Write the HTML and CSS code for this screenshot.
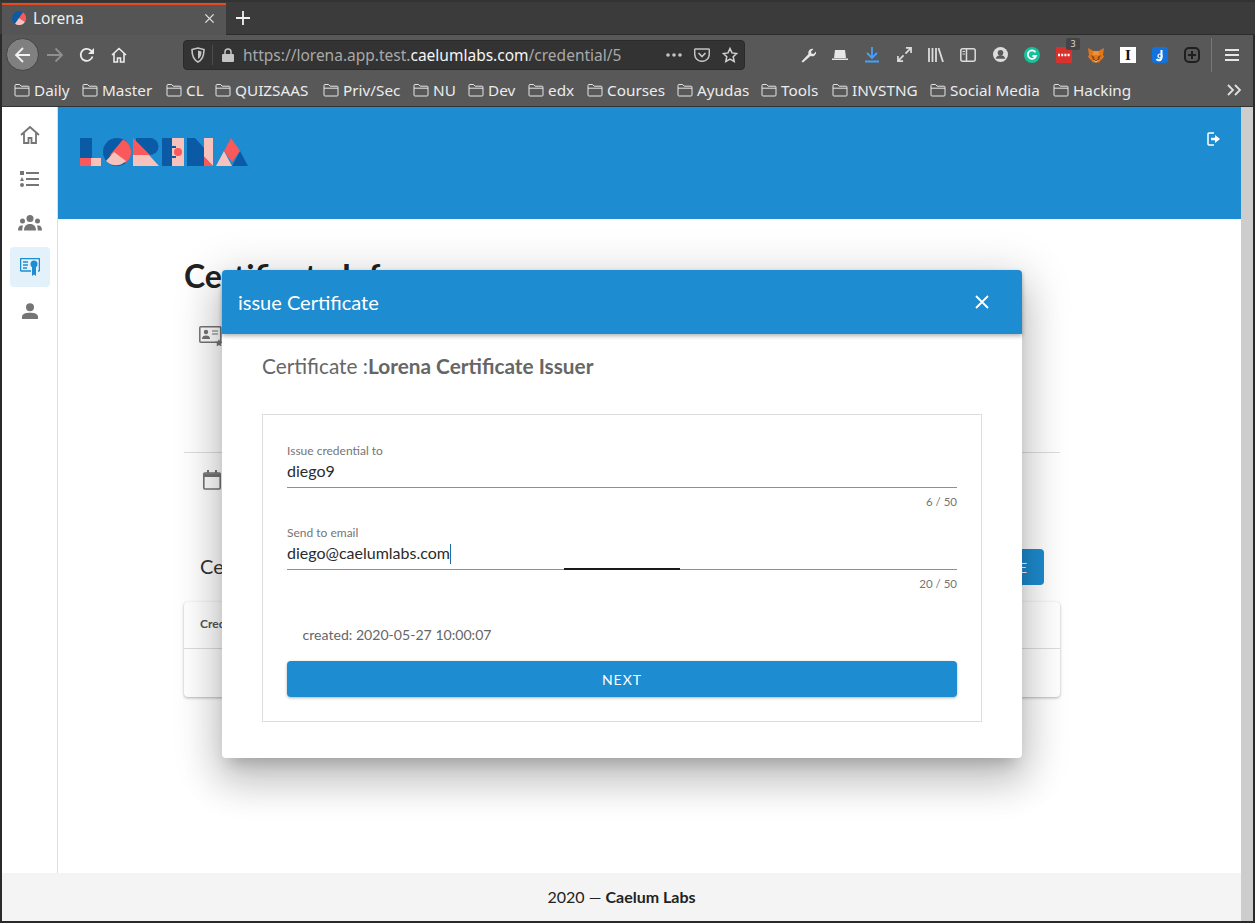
FILE: index.html

```html
<!DOCTYPE html>
<html lang="en">
<head>
  <meta charset="UTF-8">
  <title>Lorena</title>
  <link rel="stylesheet" href="styles.css">
</head>
<body>
  <svg class="defs" width="0" height="0">
    <symbol id="folder" viewBox="0 0 16 16">
      <path d="M1 13V3.500a1 1 0 0 1 1-1h3.600l1.600 1.700H14a1 1 0 0 1 1 1V13a1 1 0 0 1-1 1H2a1 1 0 0 1-1-1zM1 6.200h14" fill="none" stroke="#e6e6e6" stroke-width="1"/>
    </symbol>
  </svg>

  <div class="tabbar">
    <div class="tab">
      <svg class="favicon" viewBox="0 0 14 14">
        <circle cx="7" cy="7" r="7" fill="#0b5aa6"/>
        <path d="M7 7L11 1.300A7 7 0 0 1 13 11z" fill="#f9595a"/>
        <path d="M7 7L13 11A7 7 0 0 1 3 12.800z" fill="#f7c2bc"/>
      </svg>
      <span class="tab-title">Lorena</span>
      <svg class="tab-close" viewBox="0 0 12 12"><path d="M1.500 1.500l9 9M10.500 1.500l-9 9" stroke="#e0e0e0" stroke-width="1.500"/></svg>
    </div>
    <svg class="new-tab" viewBox="0 0 14 14"><path d="M7 0v14M0 7h14" stroke="#f2f2f2" stroke-width="1.800"/></svg>
  </div>

  <div class="toolbar">
    <div class="back"><svg viewBox="0 0 18 18" width="18" height="18"><path d="M2 9h14M9 2L2 9l7 7" fill="none" stroke="#f2f2f2" stroke-width="1.800"/></svg></div>
    <div class="tool"><svg viewBox="0 0 18 18" width="18" height="18"><path d="M1 9h15M9.500 2.500L16 9l-6.500 6.500" fill="none" stroke="#8f8f8f" stroke-width="1.800"/></svg></div>
    <div class="tool"><svg viewBox="0 0 16 16" width="16" height="16"><path d="M13.500 9.500A6 6 0 1 1 11.500 3.200L14 5.500" fill="none" stroke="#ececec" stroke-width="1.800"/><path d="M15 1v6H9z" fill="#ececec"/></svg></div>
    <div class="tool home"><svg viewBox="0 0 16 16" width="16" height="16"><path d="M1 8l7-6.500L15 8M3 6.500V15h3.500v-4h3v4H13V6.500" fill="none" stroke="#ececec" stroke-width="1.600"/></svg></div>

    <div class="urlbar">
      <svg class="url-icon" viewBox="0 0 14 16" width="14" height="16"><path d="M1 2.500L7 1l6 1.500c0 6-1 10-6 12.500C2 12.500 1 8.500 1 2.500z" fill="none" stroke="#c4c4c4" stroke-width="1.600"/><path d="M7 3.500l3.500 1c0 3-.5 5.500-3.500 7.500z" fill="#c4c4c4"/></svg>
      <span class="url-sep"></span>
      <svg class="url-lock" viewBox="0 0 12 14" width="12" height="14"><path d="M3 6V4a3 3 0 0 1 6 0v2" fill="none" stroke="#c4c4c4" stroke-width="1.500"/><rect x="0" y="6" width="12" height="8" rx="1" fill="#c4c4c4"/></svg>
      <span class="url-text">https://lorena.app.test.<b>caelumlabs.com</b>/credential/5</span>
      <svg class="url-dots" viewBox="0 0 16 4" width="16" height="4"><circle cx="2" cy="2" r="1.800" fill="#c4c4c4"/><circle cx="8" cy="2" r="1.800" fill="#c4c4c4"/><circle cx="14" cy="2" r="1.800" fill="#c4c4c4"/></svg>
      <svg class="url-pocket" viewBox="0 0 16 14" width="16" height="14"><path d="M1.500 1h13a.8.8 0 0 1 .8.800V6a7.300 7.300 0 0 1-14.600 0V1.800a.8.8 0 0 1 .8-.8z" fill="none" stroke="#c4c4c4" stroke-width="1.500"/><path d="M4.500 5L8 8.500 11.500 5" fill="none" stroke="#c4c4c4" stroke-width="1.700"/></svg>
      <svg class="url-star" viewBox="0 0 16 16" width="16" height="16"><path d="M8 1.500l2 4.400 4.700.6-3.500 3.200 1 4.700L8 12l-4.200 2.400 1-4.700-3.500-3.200 4.700-.6z" fill="none" stroke="#d0d0d0" stroke-width="1.500"/></svg>
    </div>

    <div class="addons">
      <div class="tool"><svg viewBox="0 0 16 16" width="16" height="16"><path d="M1.500 14.500l7-7.500a4 4 0 0 1 5-5l-2.500 2.500.5 2 2 .5L16 4.500a4 4 0 0 1-5.500 4.500L3 15.500z" fill="#e6e6e6"/></svg></div>
      <div class="tool"><svg viewBox="0 0 16 12" width="16" height="12"><path d="M3 1h10l1 8H2z" fill="#e6e6e6"/><path d="M0 9.500h16V11H0z" fill="#e6e6e6"/></svg></div>
      <div class="tool"><svg viewBox="0 0 14 16" width="14" height="16"><path d="M7 0v10M2 6l5 5 5-5" fill="none" stroke="#45a1ff" stroke-width="1.800"/><path d="M0 14.500h14" stroke="#45a1ff" stroke-width="2"/></svg></div>
      <div class="tool"><svg viewBox="0 0 16 16" width="15" height="15"><path d="M9.500 1H15v5.500M15 1L9 7M6.500 15H1V9.500M1 15l6-6" fill="none" stroke="#dcdcdc" stroke-width="1.800"/></svg></div>
      <div class="tool"><svg viewBox="0 0 16 14" width="16" height="14"><path d="M1 0v14M4.500 0v14M8 0v14M10.500 0l4.500 14" fill="none" stroke="#dcdcdc" stroke-width="1.800"/></svg></div>
      <div class="tool"><svg viewBox="0 0 16 14" width="16" height="14"><rect x=".8" y=".8" width="14.400" height="12.400" rx="2" fill="none" stroke="#dcdcdc" stroke-width="1.500"/><path d="M6.500 1v12" stroke="#dcdcdc" stroke-width="1.500"/><path d="M2.500 3.500h2.500M2.500 6h2.500" stroke="#dcdcdc"/></svg></div>
      <div class="tool"><svg viewBox="0 0 16 16" width="15" height="15"><circle cx="8" cy="8" r="8" fill="#dcdcdc"/><circle cx="8" cy="6.200" r="3" fill="#5a5a5a"/><path d="M2.800 12.500a5.500 5.500 0 0 1 10.400 0z" fill="#5a5a5a"/></svg></div>
      <div class="tool"><svg viewBox="0 0 16 16" width="16" height="16"><circle cx="8" cy="8" r="8" fill="#15c39a"/><path d="M11.500 5.200A4.200 4.200 0 1 0 12 9H8.500" fill="none" stroke="#fff" stroke-width="1.800"/></svg></div>
      <div class="tool addon-red">
        <svg viewBox="0 0 16 16" width="16" height="16"><rect width="16" height="16" rx="1" fill="#d9312b"/><path d="M2 8h12" stroke="#fff" stroke-width="2.400" stroke-dasharray="2 1.200"/></svg>
        <span class="badge">3</span>
      </div>
      <div class="tool"><svg viewBox="0 0 16 16" width="16" height="16"><path d="M0 1l5.500 3h5L16 1l-1 7 1 2-3 3-2 2.500H5L3 13l-3-3 1-2z" fill="#e2761b"/><path d="M5.500 4h5l1 4H4.500z" fill="#f0913a"/><path d="M3 8l3 1.500L7 13H5zM13 8l-3 1.500L9 13h2z" fill="#8f4d17"/><path d="M6 13.500h4L8 15.500z" fill="#e8d5c0"/><path d="M6.800 13h2.400L8 14.200z" fill="#2c2018"/></svg></div>
      <div class="tool"><div class="addon-i">I</div></div>
      <div class="tool"><svg viewBox="0 0 16 16" width="16" height="16"><rect width="16" height="16" rx="3" fill="#1273de"/><path d="M9.500 3v7.500a2.700 2.700 0 0 1-5 1.500" fill="none" stroke="#fff" stroke-width="2"/><circle cx="8" cy="9" r="2" fill="none" stroke="#fff" stroke-width="1.200"/></svg></div>
      <div class="tool"><svg viewBox="0 0 16 16" width="16" height="16"><rect x="1" y="1" width="14" height="14" rx="4" fill="none" stroke="#1f1f1f" stroke-width="2"/><path d="M8 4v8M4 8h8" stroke="#1f1f1f" stroke-width="2"/></svg></div>
    </div>
    <span class="tool-sep"></span>
    <div class="tool menu"><svg viewBox="0 0 14 12" width="14" height="12"><path d="M0 1h14M0 6h14M0 11h14" stroke="#e6e6e6" stroke-width="1.800"/></svg></div>
  </div>

  <div class="bookmarks">
    <div class="bookmark"><svg width="16" height="16"><use href="#folder"/></svg>Daily</div>
    <div class="bookmark"><svg width="16" height="16"><use href="#folder"/></svg>Master</div>
    <div class="bookmark"><svg width="16" height="16"><use href="#folder"/></svg>CL</div>
    <div class="bookmark"><svg width="16" height="16"><use href="#folder"/></svg>QUIZSAAS</div>
    <div class="bookmark"><svg width="16" height="16"><use href="#folder"/></svg>Priv/Sec</div>
    <div class="bookmark"><svg width="16" height="16"><use href="#folder"/></svg>NU</div>
    <div class="bookmark"><svg width="16" height="16"><use href="#folder"/></svg>Dev</div>
    <div class="bookmark"><svg width="16" height="16"><use href="#folder"/></svg>edx</div>
    <div class="bookmark"><svg width="16" height="16"><use href="#folder"/></svg>Courses</div>
    <div class="bookmark"><svg width="16" height="16"><use href="#folder"/></svg>Ayudas</div>
    <div class="bookmark"><svg width="16" height="16"><use href="#folder"/></svg>Tools</div>
    <div class="bookmark"><svg width="16" height="16"><use href="#folder"/></svg>INVSTNG</div>
    <div class="bookmark"><svg width="16" height="16"><use href="#folder"/></svg>Social Media</div>
    <div class="bookmark"><svg width="16" height="16"><use href="#folder"/></svg>Hacking</div>
    <svg class="more" viewBox="0 0 14 12" width="14" height="12"><path d="M1 1l5 5-5 5M8 1l5 5-5 5" fill="none" stroke="#e0e0e0" stroke-width="1.800"/></svg>
  </div>

  <div class="viewport">
    <div class="page">
      <div class="app">
        <nav class="sidebar">
          <a class="nav-item"><svg viewBox="0 0 20 20" width="20" height="20"><path d="M1 10L10 2l9 8M4 8v10h4.500v-5h3v5H16V8" fill="none" stroke="#757575" stroke-width="1.800"/></svg></a>
          <a class="nav-item"><svg viewBox="0 0 20 18" width="20" height="18"><path d="M0 1h4v4H0zM2 7l2 4H0zM2 13a2 2 0 1 1 0 4 2 2 0 0 1 0-4z" fill="#757575"/><path d="M6 3h13M6 9h13M6 15h13" stroke="#757575" stroke-width="2"/></svg></a>
          <a class="nav-item"><svg viewBox="0 0 24 16" width="24" height="16"><circle cx="12" cy="3.500" r="3.500" fill="#757575"/><circle cx="4.500" cy="6" r="2.500" fill="#757575"/><circle cx="19.500" cy="6" r="2.500" fill="#757575"/><path d="M6 15.500c0-4 2-6.500 6-6.500s6 2.500 6 6.500zM0 15.500c0-3 1-5 3.500-5h1.500C4.500 12 4.300 13.500 4.300 15.500zM24 15.500c0-3-1-5-3.500-5H19c.5 1.500.7 3 .7 5z" fill="#757575"/></svg></a>
          <a class="nav-item active"><svg viewBox="0 0 20 18" width="20" height="18"><path d="M11 13H1.500a1 1 0 0 1-1-1V1.500a1 1 0 0 1 1-1h17a1 1 0 0 1 1 1V12a1 1 0 0 1-1 1h-.5" fill="none" stroke="#1e8cd0" stroke-width="1.500"/><path d="M3 4h5M3 7h5M3 10h4" stroke="#1e8cd0" stroke-width="1.500"/><circle cx="14" cy="6" r="3.500" fill="#1e8cd0"/><path d="M12 8h4v10l-2-1.500-2 1.500z" fill="#1e8cd0"/></svg></a>
          <a class="nav-item"><svg viewBox="0 0 16 16" width="16" height="16"><circle cx="8" cy="4.200" r="4" fill="#757575"/><path d="M0 16v-2c0-2.800 3-4.200 8-4.200s8 1.400 8 4.200v2z" fill="#757575"/></svg></a>
        </nav>
        <main class="main">
          <header class="header">
            <svg class="logo" viewBox="0 0 168 28" width="168" height="28">
              <path d="M0 0h12v20H0z" fill="#0b5aa6"/>
              <path d="M0 20h11v8H0z" fill="#f9595a"/>
              <path d="M11 20h10v8H11z" fill="#f7c2bc"/>
              <circle cx="37" cy="14" r="14" fill="#0b5aa6"/>
              <path d="M30 17L43 1.400A14 14 0 0 1 46 25z" fill="#f9595a"/>
              <path d="M34 14L46 23A14 14 0 0 1 26 23z" fill="#f7c2bc"/>
              <path d="M56 0h14a8.500 8.500 0 0 1 0 17H56z" fill="#0b5aa6"/>
              <path d="M53 0v17h17z" fill="#f9595a"/>
              <path d="M53 17h16l10 11H53z" fill="#f7c2bc"/>
              <path d="M82 0h10v28H82z" fill="#0b5aa6"/>
              <path d="M92 0h12v28H92z" fill="#f7c2bc"/>
              <path d="M92 8h4v2h-4zM92 18h4v2h-4z" fill="#0b5aa6"/>
              <circle cx="98" cy="14" r="4" fill="#f9595a"/>
              <path d="M107 0h8l9 10v18h-17z" fill="#0b5aa6"/>
              <path d="M124 0h9v28l-9-9.500z" fill="#f7c2bc"/>
              <path d="M124 18.500l9 9.500h-9z" fill="#f9595a"/>
              <path d="M160 13l8 15h-16z" fill="#0b5aa6"/>
              <path d="M136 28l8-15 8 15z" fill="#f7c2bc"/>
              <path d="M151 0l9 13-8 11-8-11z" fill="#f9595a"/>
            </svg>
            <svg class="logout" viewBox="0 0 13 14" width="13" height="14"><path d="M7 1H2a1 1 0 0 0-1 1v10a1 1 0 0 0 1 1h5" fill="none" stroke="#fff" stroke-width="1.500"/><path d="M4 5.700h4V3l5 4-5 4V8.300H4z" fill="#fff"/></svg>
          </header>

          <div class="content">
            <h1 class="page-title">Certificate Info</h1>
            <div class="info-block">
              <svg viewBox="0 0 24 20" width="24" height="20"><rect x=".8" y=".8" width="21" height="15.500" rx="1" fill="none" stroke="#757575" stroke-width="1.500"/><circle cx="7" cy="6" r="2.200" fill="#757575"/><path d="M3 13c0-2.500 1.500-3.500 4-3.500s4 1 4 3.500z" fill="#757575"/><path d="M13 5h6M13 8h6" stroke="#757575" stroke-width="1.200"/><path d="M20 13l1.200 2.500 2.800.3-2 1.900.5 2.800-2.500-1.400-2.500 1.400.5-2.800-2-1.900 2.800-.3z" fill="#757575"/></svg>
            </div>
            <div class="info-date">
              <svg viewBox="0 0 18 20" width="18" height="20"><path d="M1.800 3h14.400a1 1 0 0 1 1 1v14a1 1 0 0 1-1 1H1.800a1 1 0 0 1-1-1V4a1 1 0 0 1 1-1z" fill="none" stroke="#757575" stroke-width="1.600"/><path d="M1 3.500h16v3.500H1zM4 0h2v3H4zM12 0h2v3h-2z" fill="#757575"/></svg>
            </div>
            <div class="cert-head">
              <h2 class="cert-title">Certificates</h2>
              <button class="issue-btn">ISSUE</button>
            </div>
            <div class="table-card">
              <div class="table-head">Credential</div>
            </div>
          </div>
        </main>
      </div>
      <footer class="footer">2020 — <b>Caelum Labs</b></footer>
    </div>
    <div class="scrollbar"></div>
  </div>

  <div class="modal">
    <div class="modal-head">
      <span>issue Certificate</span>
      <svg viewBox="0 0 14 14" width="14" height="14"><path d="M1 1l12 12M13 1L1 13" stroke="#fff" stroke-width="1.800"/></svg>
    </div>
    <div class="modal-body">
      <div class="modal-title">Certificate :<b>Lorena Certificate Issuer</b></div>
      <form class="issue-form">
        <label class="field-label">Issue credential to</label>
        <div class="field-value">diego9</div>
        <div class="field-count">6 / 50</div>
        <label class="field-label">Send to email</label>
        <div class="field-value focused">diego@caelumlabs.com<span class="caret"></span></div>
        <div class="field-count">20 / 50</div>
        <div class="created">created: 2020-05-27 10:00:07</div>
        <button class="next-btn" type="button">NEXT</button>
      </form>
    </div>
  </div>
</body>
</html>
```

FILE: styles.css

```css
* { box-sizing: border-box; }
html, body { margin: 0; height: 923px; overflow: hidden; }
body { position: relative; background: #2a2a2a; font-family: "Lato", sans-serif; color: #333; }
.defs { position: absolute; }

/* browser chrome */
.tabbar { height: 35px; padding: 1px 2px 0; background: #3b3b3b; display: flex; align-items: flex-start; border-top: 2px solid #333; border-bottom: 1px solid #2c2c2c; font-family: "Noto Sans", sans-serif; }
.tab { width: 224px; height: 32px; padding: 0 0 4px 10px; background: #555; border-top: 2px solid #e8491d; display: flex; align-items: center; color: #f0f0f0; font-size: 15.500px; }
.favicon { width: 14px; height: 14px; margin-right: 7px; }
.tab-title { flex: 1; }
.tab-close { width: 11px; height: 11px; margin-right: 11px; }
.new-tab { width: 14px; height: 14px; margin: 8px 0 0 10px; }

.toolbar { height: 37px; padding: 2px 0 0 6px; background: #585858; display: flex; align-items: center; color: #eee; font-family: "Noto Sans", sans-serif; border-left: 2px solid #2a2a2a; border-right: 2px solid #2a2a2a; }
.back { width: 33px; height: 33px; margin-left: -2px; border-radius: 50%; background: #808080; border: 1px solid #444; display: flex; align-items: center; justify-content: center; flex: none; }
.tool { width: 32px; height: 32px; display: flex; align-items: center; justify-content: center; flex: none; }
.home { width: 31px; }
.urlbar { width: 562px; height: 30px; margin-left: 49px; padding-left: 7px; background: #333; border: 1px solid #2a2a2a; border-radius: 4px; display: flex; align-items: center; flex: none; }
.url-icon { margin-right: 7px; }
.url-sep { width: 1px; height: 20px; margin-right: 9px; background: #4d4d4d; }
.url-lock { margin-right: 9px; }
.url-text { width: 423px; font-size: 15.500px; color: #a8a8a8; white-space: nowrap; }
.url-text b { font-weight: 400; color: #f5f5f5; }
.url-dots, .url-pocket { margin-right: 12px; }
.addons { display: flex; margin-left: 47px; }
.addon-red { position: relative; }
.badge { position: absolute; top: -1px; left: 18px; width: 14px; height: 12px; border-radius: 2px; background: #444; color: #ddd; font-size: 9px; line-height: 12px; text-align: center; }
.addon-i { width: 16px; height: 16px; background: #fff; color: #111; font-family: "Liberation Serif", serif; font-weight: 700; font-size: 15px; line-height: 16px; text-align: center; }
.tool-sep { width: 1px; height: 34px; margin-left: 3px; background: #777; }
.menu { width: 40px; }

.bookmarks { height: 35px; padding: 1px 0 0 12px; background: #585858; display: grid; grid-template-columns: 68px 84px 49px 108px 90px 55px 60px 59px 90px 84px 71px 98px 123px 174px 14px; align-items: center; color: #ececec; font-family: "Noto Sans", sans-serif; font-size: 15.300px; border-left: 2px solid #2a2a2a; border-right: 2px solid #2a2a2a; border-bottom: 1px solid #333; }
.bookmark { display: flex; align-items: center; gap: 4px; white-space: nowrap; }

/* page behind the dialog */
.viewport { height: 816px; padding: 0 2px 2px; display: flex; }
.page { width: 1239px; display: flex; flex-direction: column; background: #fff; }
.scrollbar { width: 12px; background: #cdcdcd; }
.app { flex: 1; display: flex; min-height: 0; }
.sidebar { width: 56px; padding: 8px 8px 0; border-right: 1px solid #dedede; display: flex; flex-direction: column; align-items: center; }
.nav-item { width: 40px; height: 40px; margin-bottom: 4px; border-radius: 4px; display: flex; align-items: center; justify-content: center; flex: none; }
.active { background: #e3f1fa; }
.main { flex: 1; display: flex; flex-direction: column; }
.header { height: 112px; padding: 31px 21px 0 22px; background: #1e8cd0; display: flex; justify-content: space-between; align-items: flex-start; }
.logout { margin-top: -6px; }
.content { padding: 39px 181px 0 126px; }
.page-title { margin: 0; font-size: 32px; line-height: 36px; font-weight: 700; color: #222; white-space: nowrap; }
.info-block { height: 159px; padding: 32px 0 0 15px; border-bottom: 1px solid #ddd; }
.info-date { height: 96px; padding: 17px 0 0 19px; }
.cert-head { height: 36px; padding: 0 16px; display: flex; justify-content: space-between; align-items: center; }
.cert-title { margin: 0 0 2px; font-size: 20px; font-weight: 400; color: #333; }
.issue-btn { height: 36px; width: 90px; border: 0; border-radius: 4px; background: #1e8cd0; color: #fff; font: 400 14px "Lato", sans-serif; letter-spacing: 1px; text-align: right; padding-right: 16px; }
.table-card { height: 95px; margin-top: 17px; border-radius: 4px; background: #fff; box-shadow: 0 1px 3px rgba(0,0,0,.3); }
.table-head { height: 47px; padding: 14px 16px 0; border-bottom: 1px solid #ddd; font-size: 12px; font-weight: 700; color: #555; }
.footer { height: 48px; background: #f4f4f4; text-align: center; line-height: 48px; font-size: 16px; color: #222; flex: none; }

/* dialog */
.modal { position: absolute; left: 222px; top: 270px; width: 800px; background: #fff; border-radius: 4px; box-shadow: 0 11px 15px -7px rgba(0,0,0,.2), 0 24px 38px 3px rgba(0,0,0,.14), 0 9px 46px 8px rgba(0,0,0,.14); }
.modal-head { height: 64px; padding: 0 33px 0 16px; background: #1e8cd0; border-radius: 4px 4px 0 0; box-shadow: 0 2px 4px rgba(0,0,0,.3); color: #fff; font-size: 20px; display: flex; align-items: center; justify-content: space-between; }
.modal-body { padding: 20px 40px 36px; }
.modal-title { height: 24px; font-size: 20.800px; line-height: 24px; color: #666; }
.issue-form { margin-top: 36px; padding: 29px 24px 24px; border: 1px solid #ddd; }
.field-label { display: block; font-size: 12px; line-height: 14px; color: #757575; }
.field-value { position: relative; margin-top: 1px; padding-bottom: 4px; border-bottom: 1px solid #8f8f8f; font-size: 16px; line-height: 24px; color: #2b2b2b; }
.focused::after { content: ""; position: absolute; left: 277px; bottom: -1px; width: 116px; height: 2px; background: #1a1a1a; }
.caret { display: inline-block; width: 1px; height: 20px; background: #1e6ea5; vertical-align: -5px; }
.field-count { margin: 7px 0 17px; font-size: 11.500px; line-height: 14px; color: #757575; text-align: right; }
.created { margin-top: -17px; padding: 34px 0 0 15.500px; font-size: 14.100px; line-height: 20px; color: #666; }
.next-btn { display: block; width: 100%; height: 36px; margin-top: 16px; border: 0; border-radius: 4px; background: #1e8cd0; box-shadow: 0 1px 3px rgba(0,0,0,.3); color: #fff; font: 400 14px "Lato", sans-serif; letter-spacing: 1px; }
```
